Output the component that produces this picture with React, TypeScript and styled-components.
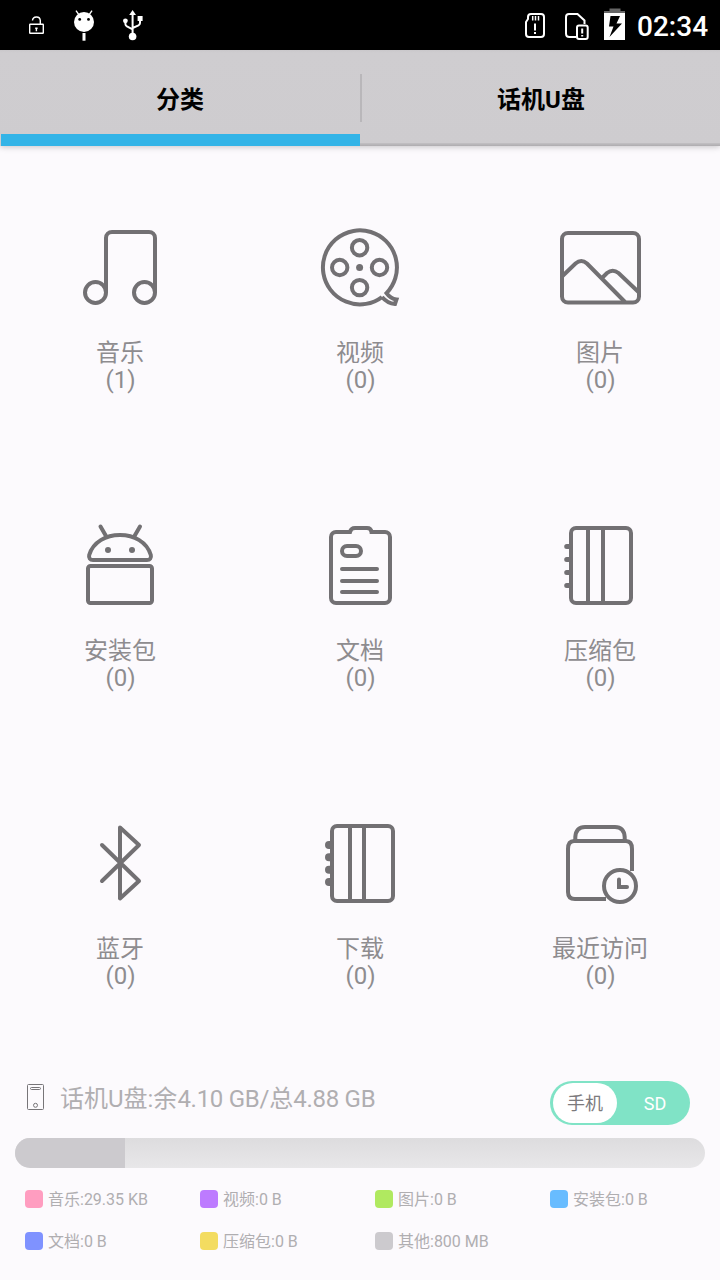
import React from "react";
import styled, { createGlobalStyle } from "styled-components";

const GlobalStyle = createGlobalStyle`
  * { box-sizing: border-box; }
  body {
    margin: 0;
    background: #fcfafd;
    font-family: Roboto, "Noto Sans CJK SC", sans-serif;
  }
`;

const Screen = styled.div`
  width: 720px;
  height: 1280px;
  display: flex;
  flex-direction: column;
  overflow: hidden;
  background: #fcfafd;
`;

const StatusBar = styled.header`
  height: 50px;
  flex: none;
  display: flex;
  justify-content: space-between;
  align-items: center;
  padding: 0 12px;
  background: #000;
  color: #fff;
`;

const Notifications = styled.div`
  display: flex;
`;

const SystemTray = styled.div`
  display: flex;
  align-items: center;
`;

const StatusIcon = styled.svg<{ $width: number; $stroke?: number }>`
  display: block;
  width: ${(p) => p.$width}px;
  height: 50px;
  fill: none;
  stroke: #fff;
  stroke-width: ${(p) => p.$stroke ?? 2};
`;

const Clock = styled.time`
  width: 71px;
  margin-left: 11px;
  font-size: 28px;
  font-weight: 500;
  line-height: 50px;
  padding-top: 3px;
  white-space: nowrap;
`;

const Tabs = styled.nav`
  flex: none;
  height: 96px;
  display: flex;
  background: linear-gradient(#cac8cb, #cfcdd0 3px, #cecccf);
  box-shadow: 0 1px 6px rgba(0, 0, 0, 0.22);
`;

const Tab = styled.button<{ $active?: boolean }>`
  flex: 0 0 360px;
  border: 0;
  padding: ${(p) => (p.$active ? "3px 0 0" : "3px 0 0 2px")};
  font: bold 24px/28px Roboto, "Noto Sans CJK SC", sans-serif;
  color: #000;
  background: ${(p) =>
    p.$active
      ? "linear-gradient(#33b4e7, #33b4e7) 1px 84px / 359px 12px no-repeat"
      : "linear-gradient(#c2c0c3, #aeacaf) 0 93px / 100% 3px no-repeat"};
`;

const TabDivider = styled.span`
  width: 2px;
  height: 48px;
  margin: 24px -2px 0 0;
  background: #b9b7ba;
  flex: none;
  z-index: 1;
`;

const CategoryGrid = styled.main`
  flex: none;
  display: grid;
  grid-template-columns: repeat(3, 240px);
  grid-auto-rows: 298px;
`;

const Category = styled.div`
  display: flex;
  flex-direction: column;
  align-items: center;
  padding-top: 74px;
`;

const CategoryIcon = styled.svg`
  width: 96px;
  height: 96px;
  margin-bottom: 23px;
  fill: none;
  stroke: #727073;
  stroke-width: 4;
`;

const CategoryName = styled.span`
  font-size: 24px;
  line-height: 28px;
  color: #8e8c8f;
`;

const CategoryCount = styled.span`
  margin-top: -1px;
  font-size: 24px;
  line-height: 28px;
  padding-left: 1px;
  color: #8e8c8f;
`;

const Storage = styled.section`
  display: flex;
  flex-direction: column;
  padding: 41px 15px 0;
  color: #b0aeb1;
`;

const StorageHeader = styled.div`
  height: 44px;
  display: flex;
  align-items: flex-start;
  padding: 0 15px 0 12px;
`;

const PhoneIcon = styled.svg`
  width: 17px;
  height: 26px;
  margin: 3px 16px 0 0;
  fill: none;
  stroke: #777578;
`;

const StorageTitle = styled.span`
  flex: 1;
  font-size: 24px;
  line-height: 28px;
  margin-top: 4px;
  white-space: nowrap;
`;

const Amount = styled.span`
  letter-spacing: -0.27px;
`;

const Switch = styled.div`
  width: 140px;
  height: 44px;
  display: flex;
  padding: 2px 3px;
  border-radius: 22px;
  background: #80e3c6;
  font-size: 18px;
  line-height: 42px;
  text-align: center;
`;

const SwitchKnob = styled.span`
  width: 64px;
  height: 40px;
  border-radius: 20px;
  background: #fff;
  color: #7c7a7d;
`;

const SwitchOption = styled.span`
  flex: 1;
  padding-left: 6px;
  color: #fff;
`;

const UsageBar = styled.div`
  height: 30px;
  margin-top: 13px;
  border-radius: 15px;
  overflow: hidden;
  background: linear-gradient(#dddcde, #e8e7e9);
`;

const UsageFill = styled.div`
  width: 110px;
  height: 100%;
  background: #cccace;
`;

const Legend = styled.div`
  display: grid;
  grid-template-columns: repeat(4, 175px);
  grid-auto-rows: 18px;
  row-gap: 24px;
  padding: 22px 0 0 10px;
`;

const LegendItem = styled.div`
  display: flex;
  align-items: flex-start;
  gap: 5px;
  font-size: 16px;
  line-height: 20px;
  white-space: nowrap;
`;

const Swatch = styled.i<{ $color: string }>`
  width: 18px;
  height: 18px;
  border-radius: 4px;
  background: ${(p) => p.$color};
`;

const categories = [
  {
    name: "音乐",
    count: 1,
    icon: (
      <>
        <circle cx="23.5" cy="72.5" r="10.5" />
        <circle cx="72.5" cy="72.5" r="10.5" />
        <path d="M34 72.5V18a6 6 0 0 1 6-6h37a6 6 0 0 1 6 6v54.5" />
      </>
    ),
  },
  {
    name: "视频",
    count: 0,
    icon: (
      <>
        <path d="M70 77.050A37 37 0 1 1 74.500 73.100Q78.500 78.800 84.500 79.500L83 84Q75.500 83.500 70 77.050" />
        <circle cx="47.600" cy="27.700" r="7.700" />
        <circle cx="27.700" cy="47.500" r="7.700" />
        <circle cx="67.500" cy="47.500" r="7.700" />
        <circle cx="47.600" cy="67.600" r="7.700" />
        <circle cx="47.600" cy="47.600" r="3.500" fill="#727073" stroke="none" />
      </>
    ),
  },
  {
    name: "图片",
    count: 0,
    icon: (
      <>
        <rect x="10" y="13" width="77" height="69.500" rx="6" />
        <path d="M10 56.500L23.500 43.500Q29.300 38.500 35 43.500L73 82M50 58L55 53Q60.700 48.500 66.500 53L87 72.500" />
      </>
    ),
  },
  {
    name: "安装包",
    count: 0,
    icon: (
      <>
        <path d="M28.500 8.500L34 18M68 8.500L62.500 18" strokeLinecap="round" />
        <path d="M21 42H75C78 42 79.500 40 78.800 37C75 24 62 17 48 17S21 24 17.200 37C16.500 40 18 42 21 42Z" />
        <circle cx="36" cy="32" r="3" fill="#727073" stroke="none" />
        <circle cx="60" cy="32" r="3" fill="#727073" stroke="none" />
        <rect x="16" y="48" width="64" height="37" rx="2.500" />
      </>
    ),
  },
  {
    name: "文档",
    count: 0,
    icon: (
      <>
        <path d="M38 14H24a5 5 0 0 0-5 5V80a5 5 0 0 0 5 5H73a5 5 0 0 0 5-5V19a5 5 0 0 0-5-5H59.500Q59 10 55 10H43Q39 10 38 14Z" />
        <rect x="30" y="28" width="19" height="10" rx="5" />
        <path d="M30 51H65M30 63H65M30 74H65" strokeLinecap="round" />
      </>
    ),
  },
  {
    name: "压缩包",
    count: 0,
    icon: (
      <>
        <rect x="19" y="10" width="60" height="75" rx="5" />
        <path d="M36 10V85M51 10V85" />
        <path d="M14.700 28.500H18M14.700 41.500H18M14.700 54.500H18M14.700 67.500H18" strokeWidth="5" strokeLinecap="round" />
      </>
    ),
  },
  {
    name: "蓝牙",
    count: 0,
    icon: (
      <path d="M30 29L67 65L48 82.500V11.500L67 29L30 65" strokeLinecap="round" strokeLinejoin="round" />
    ),
  },
  {
    name: "下载",
    count: 0,
    icon: (
      <>
        <rect x="20" y="10" width="61" height="75" rx="5" />
        <path d="M38 10V85M52 10V85" />
        <path d="M17 29H18M17 41.300H18M17 53.700H18M17 66H18" strokeWidth="8" strokeLinecap="round" />
      </>
    ),
  },
  {
    name: "最近访问",
    count: 0,
    icon: (
      <>
        <path d="M23.300 24V21Q24 11 33 11H63Q72 11 72.700 21V24" />
        <path d="M54 83H23Q16 83 16 76V33Q16 25 22 25H74Q80 25 80 33V55" />
        <circle cx="68" cy="70" r="16" />
        <path d="M67 63.500V71H75" strokeLinecap="round" />
      </>
    ),
  },
];

const legend = [
  { text: "音乐:29.35 KB", color: "#ff9dc0" },
  { text: "视频:0 B", color: "#bd7bff" },
  { text: "图片:0 B", color: "#b0e960" },
  { text: "安装包:0 B", color: "#68bcff" },
  { text: "文档:0 B", color: "#7f92ff" },
  { text: "压缩包:0 B", color: "#f3dc60" },
  { text: "其他:800 MB", color: "#cccace" },
];

export default function App() {
  return (
    <Screen>
      <GlobalStyle />
      <StatusBar>
        <Notifications>
          <StatusIcon $width={48} $stroke={1.4} viewBox="0 0 48 50">
            <rect x="17.700" y="24.300" width="13.600" height="9" rx=".5" />
            <path d="M20.500 20.500C20.700 16 28 15.500 28.300 20.500V24M24.400 27.500V31.300M23.200 28.200H25.600" />
          </StatusIcon>
          <StatusIcon $width={48} $stroke={1.4} viewBox="0 0 48 50">
            <circle cx="24" cy="22" r="10" fill="#fff" stroke="none" />
            <path d="M16 10.700L19 14.800M32 10.700L29 14.800" />
            <rect x="22.500" y="33" width="3" height="7.700" fill="#fff" stroke="none" />
            <circle cx="19.700" cy="19.400" r="1.400" fill="#000" stroke="none" />
            <circle cx="28.500" cy="19.400" r="1.400" fill="#000" stroke="none" />
          </StatusIcon>
          <StatusIcon $width={48} viewBox="0 0 48 50">
            <path d="M24.600 14V36M17.400 21V24Q17.400 25.500 19 26.500L24.600 29.300M32 19V23Q32 24.500 30.500 25.300L24.600 28" />
            <path d="M24.600 10L28 15H21.200Z" fill="#fff" stroke="none" />
            <circle cx="24.600" cy="36.500" r="3.800" fill="#fff" stroke="none" />
            <circle cx="17.400" cy="20.800" r="2.400" fill="#fff" stroke="none" />
            <rect x="29.600" y="16" width="5" height="5" fill="#fff" stroke="none" />
          </StatusIcon>
        </Notifications>
        <SystemTray>
          <StatusIcon $width={41} viewBox="0 0 41 50">
            <path d="M17 14H27Q30 14 30 17V34Q30 37 27 37H15Q12 37 12 34V22L14 19V17Q14 14 17 14Z" />
            <path d="M18.700 16V20.500M21.500 16V20.500M24.500 16V20.500" strokeWidth="1.500" />
            <path d="M21 23.500V30.500M21 32V34" />
          </StatusIcon>
          <StatusIcon $width={49} viewBox="0 0 49 50">
            <path d="M21 37H14.500Q11 37 11 33.500V17Q11 14 14 14H22.500L29.500 20.500V24" />
            <rect x="22" y="25.500" width="10.700" height="13.500" rx="2" />
            <path d="M27.200 28.500V33.500M27.200 35V36.500" />
          </StatusIcon>
          <StatusIcon $width={22} viewBox="0 0 22 50">
            <path d="M5.500 8.500H16.500V11H21V14H0V11H5.500Z" fill="#666" stroke="none" />
            <rect x="0" y="13" width="21" height="27" fill="#fff" stroke="none" />
            <path d="M6.500 16H16L12.500 23.500H18L5.500 37L9.500 26.500H5Z" fill="#000" stroke="none" />
          </StatusIcon>
          <Clock>02:34</Clock>
        </SystemTray>
      </StatusBar>

      <Tabs>
        <Tab $active>分类</Tab>
        <TabDivider />
        <Tab>话机U盘</Tab>
      </Tabs>

      <CategoryGrid>
        {categories.map((c) => (
          <Category key={c.name}>
            <CategoryIcon viewBox="0 0 96 96">{c.icon}</CategoryIcon>
            <CategoryName>{c.name}</CategoryName>
            <CategoryCount>({c.count})</CategoryCount>
          </Category>
        ))}
      </CategoryGrid>

      <Storage>
        <StorageHeader>
          <PhoneIcon viewBox="0 0 17 26">
            <rect x=".5" y=".5" width="16" height="25" rx="1" />
            <rect x="3.500" y="3.500" width="10" height="2" rx="1" />
            <circle cx="8.500" cy="21.300" r="2" />
          </PhoneIcon>
          <StorageTitle>
            话机U盘:余<Amount>4.10 GB/</Amount>总<Amount>4.88 GB</Amount>
          </StorageTitle>
          <Switch>
            <SwitchKnob>手机</SwitchKnob>
            <SwitchOption>SD</SwitchOption>
          </Switch>
        </StorageHeader>
        <UsageBar>
          <UsageFill />
        </UsageBar>
        <Legend>
          {legend.map((l) => (
            <LegendItem key={l.text}>
              <Swatch $color={l.color} />
              {l.text}
            </LegendItem>
          ))}
        </Legend>
      </Storage>
    </Screen>
  );
}
